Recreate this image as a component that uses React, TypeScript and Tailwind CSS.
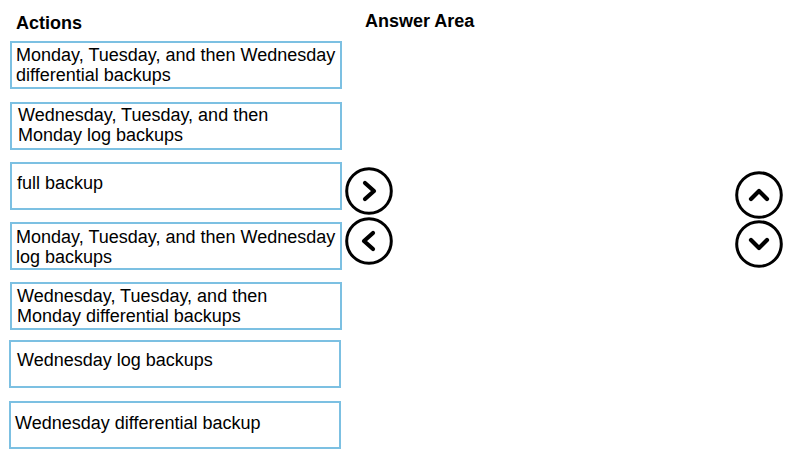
import React from "react";

type ActionType = {
  lines: string[];
  box: string;
  text: string;
};

const actions: ActionType[] = [
  {
    lines: ["Monday, Tuesday, and then Wednesday", "differential backups"],
    box: "mt-[9px] ml-[10px] w-[332px]",
    text: "pt-[2px] pl-[4px]",
  },
  {
    lines: ["Wednesday, Tuesday, and then", "Monday log backups"],
    box: "mt-[13px] ml-[10px] w-[332px]",
    text: "pt-[1px] pl-[6px]",
  },
  {
    lines: ["full backup"],
    box: "mt-[12px] ml-[10px] w-[332px]",
    text: "pt-[9px] pl-[5px]",
  },
  {
    lines: ["Monday, Tuesday, and then Wednesday", "log backups"],
    box: "mt-[12px] ml-[10px] w-[332px]",
    text: "pt-[3px] pl-[4px]",
  },
  {
    lines: ["Wednesday, Tuesday, and then", "Monday differential backups"],
    box: "mt-[12px] ml-[10px] w-[332px]",
    text: "pt-[2px] pl-[5px]",
  },
  {
    lines: ["Wednesday log backups"],
    box: "mt-[10px] ml-[9px] w-[332px]",
    text: "pt-[8px] pl-[6px]",
  },
  {
    lines: ["Wednesday differential backup"],
    box: "mt-[13px] ml-[9px] w-[332px]",
    text: "pt-[10px] pl-[4px]",
  },
];

const chevrons: Record<string, string> = {
  right: "M20 16 L29 24 L20 32",
  left: "M28 16 L19 24 L28 32",
  up: "M16 28 L24 20 L32 28",
  down: "M16 20 L24 28 L32 20",
};

const CircleButton = (props: { dir: string }) => (
  <svg width="48" height="48" viewBox="0 0 48 48" className="block">
    <circle cx="24" cy="24" r="22.3" fill="none" stroke="#000" strokeWidth="3" />
    <path d={chevrons[props.dir]} fill="none" stroke="#000" strokeWidth="4.2" strokeLinecap="round" strokeLinejoin="round" />
  </svg>
);

export default function App() {
  return (
    <div className="flex w-[799px] h-[462px] bg-white text-black font-['Liberation_Sans',Arial,sans-serif] overflow-hidden">
      <div className="w-[345px] shrink-0">
        <h1 className="pt-[14px] pl-[16px] text-[18px] leading-[18px] font-bold">Actions</h1>
        {actions.map(action => (
          <div key={action.lines.join(" ")} className={`${action.box} h-[48px] border-2 border-[#7cc0e2]`}>
            <p className={`${action.text} text-[18px] leading-[20px] whitespace-nowrap`}>
              {action.lines.map(line => (
                <span key={line} className="block">
                  {line}
                </span>
              ))}
            </p>
          </div>
        ))}
      </div>

      <div className="flex-1 flex flex-col">
        <h1 className="pt-[12px] pl-[20px] text-[18px] leading-[18px] font-bold">Answer Area</h1>
        <div className="flex justify-between pr-[16px]">
          <div className="mt-[137px] flex flex-col gap-[2px]">
            <CircleButton dir="right" />
            <CircleButton dir="left" />
          </div>
          <div className="mt-[141px] flex flex-col gap-[1px]">
            <CircleButton dir="up" />
            <CircleButton dir="down" />
          </div>
        </div>
      </div>
    </div>
  );
}
